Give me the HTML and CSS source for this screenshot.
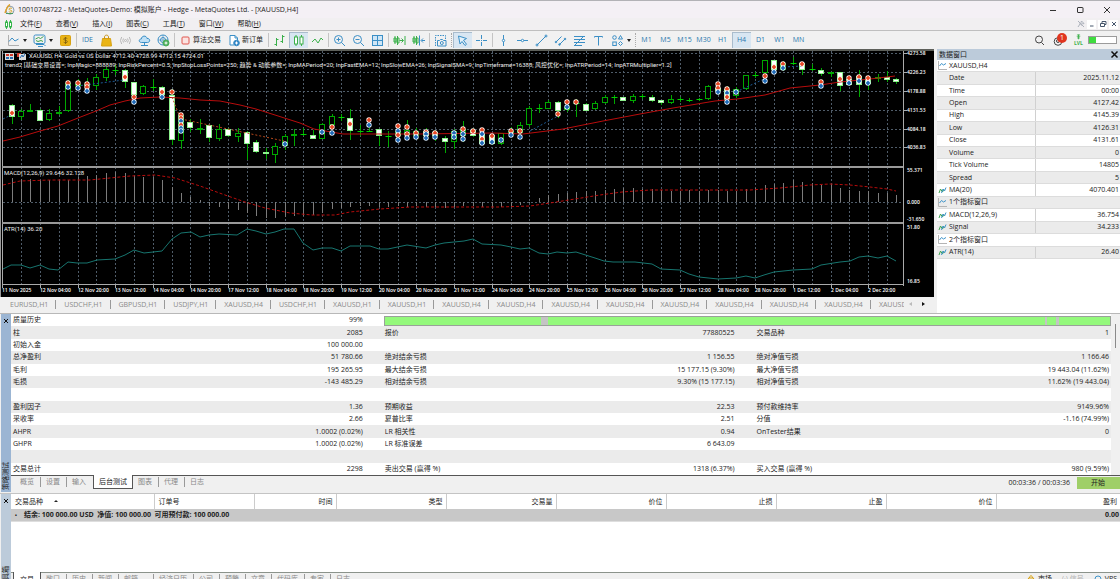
FILE: index.html
```html
<!DOCTYPE html>
<html lang="zh-CN">
<head>
<meta charset="utf-8">
<title>10010748722 - MetaQuotes-Demo: 模拟账户 - Hedge - MetaQuotes Ltd. - [XAUUSD,H4]</title>
<link rel="stylesheet" href="styles.css">
</head>
<body>
<svg class="defs" width="0" height="0" aria-hidden="true">
  <symbol id="i-window" viewBox="0 0 9 9"><path d="M.5 0v8.5H9" stroke="#b4b4b4"/><path d="M1.500 5l2-2.500 2 1.500L8 2.500" stroke="#3d93c9"/></symbol>
  <symbol id="i-ind" viewBox="0 0 9 9"><path d="M1 7l1.500-4 2 3L6 3" stroke="#3fa34f"/><path d="M3.500 7L5 3l1.500 2L8 1.500" stroke="#3d93c9"/></symbol>
</svg>

<header class="titlebar">
  <svg class="logo" viewBox="0 0 11 11"><circle cx="6" cy="6.200" r="4" fill="#eef3f7" stroke="#8a9bab"/><path d="M6 .5c-2 1-3 3-3.500 4.500L1 9" stroke="#e0a02a" stroke-width="1.500"/><path d="M8 4.500c-1-.8-3-.5-3 .7s3 .8 3 2-2.200 1.300-3.200.4" stroke="#dba12c"/><path d="M2 9.500h7" stroke="#4b9a62"/></svg>
  <h1>10010748722 - MetaQuotes-Demo: 模拟账户 - Hedge - MetaQuotes Ltd. - [XAUUSD,H4]</h1>
  <div class="wincontrols">
    <button aria-label="最小化"><svg viewBox="0 0 8 8"><path d="M1 4.500h6"/></svg></button>
    <button aria-label="最大化"><svg viewBox="0 0 8 8"><rect x="1.500" y="1.500" width="5.500" height="5" rx=".5"/></svg></button>
    <button aria-label="关闭"><svg viewBox="0 0 8 8"><path d="M1 1l6 6M7 1L1 7"/></svg></button>
  </div>
</header>

<nav class="menubar">
  <svg class="menuicon" viewBox="0 0 9 9"><path d="M2.500 0v9M6.500 0v9"/><rect x="1.500" y="2" width="2" height="5" fill="#fff"/><rect x="5.500" y="2" width="2" height="5" fill="#fff"/></svg>
  <button>文件(<u>F</u>)</button><button>查看(<u>V</u>)</button><button>插入(<u>I</u>)</button><button>图表(<u>C</u>)</button><button>工具(<u>T</u>)</button><button>窗口(<u>W</u>)</button><button>帮助(<u>H</u>)</button>
  <div class="mdi">
    <button class="off" aria-label="固定"><svg viewBox="0 0 8 8"><path d="M1 1l6 6M4.500 1L7 3.500 5.500 4 4 2.500zM3 4L1 7M2.500 3l3 3"/></svg></button>
    <button aria-label="最小化图表"><svg viewBox="0 0 8 8"><path d="M2 6h3.500"/></svg></button>
    <button aria-label="还原图表"><svg viewBox="0 0 8 8"><path d="M3 3V1.500h4V4.500H5.500M1.500 3.500h4v3h-4z"/></svg></button>
    <button aria-label="关闭图表"><svg viewBox="0 0 8 8"><path d="M2 2l4 4M6 2L2 6"/></svg></button>
  </div>
</nav>

<div class="toolbar">
  <button class="dd" aria-label="图表类型"><svg viewBox="0 0 13 13"><path d="M1.500 1v10.500H12" stroke="#b0b0b0"/><path d="M2 7.500l3-3.500 3 3 3.500-2"/></svg><i></i></button>
  <button class="dd" aria-label="模板"><svg viewBox="0 0 13 13"><path d="M3 10.500h8l1.500 1.500M5 12.500h5"/><rect x="1" y="1" width="11" height="8.500" rx="1.500"/><path d="M2.500 5l3-1.500 2 1 3-2" stroke="#3fa34f"/><path d="M3 6.500l2 1 3-1 2 1" stroke="#3fa34f"/></svg><i></i></button>
  <button aria-label="资金"><svg viewBox="0 0 13 13"><rect x="1.500" y="1.500" width="10" height="10" rx="1" fill="#eab414" stroke="#d8a213"/><path d="M8.300 4.500c-1.200-.9-3.600-.6-3.600.7s3.700 1 3.700 2.400-2.700 1.500-3.800.5M6.500 3v7" stroke="#7a5a10" stroke-width=".8"/></svg></button>
  <span class="sep"></span>
  <button class="word">IDE</button>
  <button aria-label="市场"><svg viewBox="0 0 13 13"><path d="M2.500 4.500h8l1 7.500h-10z" fill="#eab414" stroke="#d8a213"/><path d="M4.500 5V3c0-2.500 4-2.500 4 0v2" stroke="#c9941a"/></svg></button>
  <button aria-label="信号"><svg viewBox="0 0 13 13" class="mute"><circle cx="6.500" cy="6.500" r="1"/><path d="M4.500 4.500q-1.500 2 0 4M8.500 4.500q1.500 2 0 4M2.700 3q-2.500 3.500 0 7M10.300 3q2.500 3.500 0 7"/></svg></button>
  <button aria-label="云"><svg viewBox="0 0 13 13"><path d="M3.500 8.500C.5 8.500.5 5 3.300 5 3.500 1.500 8.500 1 9 4.500c3.500-.5 3.500 4 .5 4z" fill="#bfe0f5"/><path d="M6.500 8.500V11M3 11.500h7"/></svg></button>
  <button aria-label="社区"><svg viewBox="0 0 13 13"><circle cx="6" cy="6" r="5"/><circle cx="6" cy="6" r="2.500"/><path d="M1 6h10M6 1v10" stroke-width=".6"/><circle cx="9" cy="9" r="3" fill="#4cae5b" stroke="#4cae5b"/><path d="M7.500 9h3M9 7.500v3" stroke="#fff"/></svg></button>
  <span class="sep"></span>
  <button class="text"><svg viewBox="0 0 13 13"><rect x="3" y="3" width="7" height="7" rx="1" stroke="#e0574f" fill="#fbe3e1"/></svg>算法交易</button>
  <button class="text"><svg viewBox="0 0 13 13"><path d="M9.500 6V4L7 1.500H2v9.500h4" fill="#fff"/><path d="M7 1.500V4h2.500"/><circle cx="8.500" cy="9" r="2.800" fill="#2f82c4"/><path d="M7 9h3M8.500 7.500v3" stroke="#fff"/></svg>新订单</button>
  <span class="sep"></span>
  <button aria-label="柱状图"><svg viewBox="0 0 13 13" class="green"><path d="M3.500 4v8M1.500 10.500h2M3.500 5.500h2M9.500 1v8M7.500 7.500h2M9.500 2.500h2"/></svg></button>
  <button class="on" aria-label="蜡烛图"><svg viewBox="0 0 13 13" class="green"><path d="M4 1v11M9.500 1v11"/><rect x="2.500" y="3" width="3" height="7" fill="#fff"/><rect x="8" y="3" width="3" height="7" fill="#fff"/></svg></button>
  <button aria-label="折线图"><svg viewBox="0 0 13 13" class="green"><path d="M1 8l3-3 3 4 3-5 2 2"/></svg></button>
  <span class="sep"></span>
  <button aria-label="放大"><svg viewBox="0 0 13 13"><circle cx="5.500" cy="5.500" r="4"/><path d="M8.500 8.500L12 12M3.500 5.500h4M5.500 3.500v4"/></svg></button>
  <button aria-label="缩小"><svg viewBox="0 0 13 13"><circle cx="5.500" cy="5.500" r="4"/><path d="M8.500 8.500L12 12M3.500 5.500h4"/></svg></button>
  <button aria-label="平铺"><svg viewBox="0 0 13 13"><rect x="1.500" y="1.500" width="10" height="10" fill="#cfe6f6"/><path d="M6.500 1.500v10M1.500 6.500h10"/></svg></button>
  <span class="sep"></span>
  <button aria-label="自动滚动"><svg viewBox="0 0 13 13" class="green"><path d="M2 2v8M4.500 2v9M1 4h2v4H1zM4 4h2v5H4zM6.500 6.500H10M8.500 4.500l2 2-2 2M12 2v9"/></svg></button>
  <button aria-label="图表平移"><svg viewBox="0 0 13 13"><path class="green" d="M2 2v8M4.500 2v9M1 4h2v4H1zM4 4h2v5H4z"/><path d="M7.500 1.500v10M13 6.500H9.500M11 4.500l-2 2 2 2"/></svg></button>
  <span class="sep"></span>
  <button aria-label="截图"><svg viewBox="0 0 13 13"><path d="M1.500 12V1.500h10V5" stroke-dasharray="1.500 1"/><path d="M3.500 6.500h2l1-1h2l1 1h2.500v5.500H3.500z"/><circle cx="7.800" cy="9" r="1.500"/></svg></button>
  <span class="sep dots"></span>
  <button class="on" aria-label="光标"><svg viewBox="0 0 13 13"><path d="M2.500 2l8 2.500-3 1.800 3 4-1.500 1.200-3-4-2 2.500z" fill="#e4f1fa"/></svg></button>
  <button aria-label="十字"><svg viewBox="0 0 13 13"><path d="M6.500 1v4M6.500 8v4M1 6.500h4M8 6.500h4M6 6.500h1"/></svg></button>
  <span class="sep"></span>
  <button aria-label="垂直线"><svg viewBox="0 0 13 13"><path d="M6.500 1v11"/><circle cx="6.500" cy="6.500" r="1.200" fill="#fff"/></svg></button>
  <button aria-label="水平线"><svg viewBox="0 0 13 13"><path d="M1 6.500h11"/><circle cx="6.500" cy="6.500" r="1.200" fill="#fff"/></svg></button>
  <button aria-label="趋势线"><svg viewBox="0 0 13 13"><path d="M2 11l9-9"/><circle cx="2" cy="11" r="1"/><circle cx="11" cy="2" r="1"/></svg></button>
  <button aria-label="通道"><svg viewBox="0 0 13 13"><path d="M1.500 8.500l6-6M5 11l6.500-6.500"/><circle cx="2" cy="8" r=".8"/><circle cx="5.500" cy="10.500" r=".8"/><circle cx="11" cy="5" r=".8"/></svg></button>
  <button aria-label="斐波那契"><svg viewBox="0 0 13 13"><path d="M1 2.500h11M1 5.500h11M1 8.500h11M1 11.500h8M2 11l8-8"/></svg></button>
  <button aria-label="文本"><svg viewBox="0 0 13 13"><path d="M2.500 3.500V2.500h8v1M6.500 2.500v9"/></svg></button>
  <button class="dd" aria-label="图形"><svg viewBox="0 0 13 13"><circle cx="3.500" cy="3.500" r="1.800"/><path d="M9.500 1.500l2 3.500h-4zM9.500 7.500l2 2-2 2-2-2z"/><rect x="1.800" y="8" width="3.500" height="3.500"/></svg><i></i></button>
  <span class="sep dots"></span>
  <button class="word">M1</button><button class="word">M5</button><button class="word">M15</button><button class="word">M30</button><button class="word">H1</button><button class="word on">H4</button><button class="word">D1</button><button class="word">W1</button><button class="word">MN</button>
  <div class="status">
    <button aria-label="搜索"><svg viewBox="0 0 13 13" class="dark"><circle cx="6" cy="5.500" r="3.500"/><path d="M8.500 8.500L11 11"/></svg></button>
    <button class="bell" aria-label="通知"><svg viewBox="0 0 13 13" class="dark"><circle cx="5" cy="7.500" r="3.800"/><circle cx="5" cy="7" r="1.500"/></svg><b>1</b></button>
    <button class="lvl" aria-label="等级"><svg viewBox="0 0 9 8" class="green"><path d="M4.500 1v5M2.500 2.500h4M3 4.500h3M4.500 0l1 1-1 1-1-1z"/></svg><span>LVL</span></button>
    <span class="meter"><span></span></span>
  </div>
</div>

<main class="work">
  <section class="chartside">
    <svg id="chart" class="chart" viewBox="0 49 934 248" role="img" aria-label="XAUUSD, H4"></svg>
    <nav class="charttabs">
      <div class="tablist">
        <a href="#">EURUSD,H1</a><a href="#">USDCHF,H1</a><a href="#">GBPUSD,H1</a><a href="#">USDJPY,H1</a><a href="#">XAUUSD,H4</a><a href="#">USDCHF,H1</a><a href="#">XAUUSD,H1</a><a href="#">XAUUSD,H1</a><a href="#">XAUUSD,H4</a><a href="#">XAUUSD,H4</a><a href="#">XAUUSD,H4</a><a href="#">XAUUSD,H4</a><a href="#">XAUUSD,H4</a><a href="#">XAUUSD,H4</a><a href="#">XAUUSD,H4</a><a href="#">XAUUSD,H4</a><a href="#">XAUUSD</a>
      </div>
      <button class="arrow left" aria-label="向左"></button>
      <button class="arrow right" aria-label="向右"></button>
    </nav>
  </section>
  <aside class="datawin">
    <header><h2>数据窗口</h2><button class="x" aria-label="关闭"><svg viewBox="0 0 6 6"><path d="M1 1l4 4M5 1L1 5"/></svg></button></header>
    <table>
      <colgroup><col class="name"><col></colgroup>
      <tr class="wide"><td colspan="2"><svg><use href="#i-window"/></svg>XAUUSD,H4</td></tr>
      <tr><td>Date</td><td>2025.11.12</td></tr>
      <tr><td>Time</td><td>00:00</td></tr>
      <tr><td>Open</td><td>4127.42</td></tr>
      <tr><td>High</td><td>4145.39</td></tr>
      <tr><td>Low</td><td>4126.31</td></tr>
      <tr><td>Close</td><td>4131.61</td></tr>
      <tr><td>Volume</td><td>0</td></tr>
      <tr><td>Tick Volume</td><td>14805</td></tr>
      <tr><td>Spread</td><td>5</td></tr>
      <tr class="ico"><td><svg><use href="#i-ind"/></svg>MA(20)</td><td>4070.401</td></tr>
      <tr class="wide"><td colspan="2"><svg><use href="#i-window"/></svg>1个指标窗口</td></tr>
      <tr class="ico"><td><svg><use href="#i-ind"/></svg>MACD(12,26,9)</td><td>36.754</td></tr>
      <tr class="ico"><td><svg><use href="#i-ind"/></svg>Signal</td><td>34.233</td></tr>
      <tr class="wide"><td colspan="2"><svg><use href="#i-window"/></svg>2个指标窗口</td></tr>
      <tr class="ico"><td><svg><use href="#i-ind"/></svg>ATR(14)</td><td>26.40</td></tr>
    </table>
  </aside>
</main>

<section class="panel tester">
  <div class="strip"><button class="x" aria-label="关闭"><svg viewBox="0 0 6 6"><path d="M1 1l4 4M5 1L1 5"/></svg></button><span>策略测试</span></div>
  <div class="body">
    <div class="scroll">
      <table class="report">
        <colgroup><col class="a"><col class="a"><col class="b"><col class="b"><col class="c"><col class="c"></colgroup>
        <tr><td>质量历史</td><td>99%</td><td colspan="4" class="quality"><div><i style="left:21.5%;width:1%"></i><i style="left:91%;width:.3%"></i><i style="left:92.600%;width:.4%"></i></div></td></tr>
        <tr><td>柱</td><td>2085</td><td>报价</td><td>77880525</td><td>交易品种</td><td>1</td></tr>
        <tr><td>初始入金</td><td>100 000.00</td><td></td><td></td><td></td><td></td></tr>
        <tr><td>总净盈利</td><td>51 780.66</td><td>绝对结余亏损</td><td>1 156.55</td><td>绝对净值亏损</td><td>1 166.46</td></tr>
        <tr><td>毛利</td><td>195 265.95</td><td>最大结余亏损</td><td>15 177.15 (9.30%)</td><td>最大净值亏损</td><td>19 443.04 (11.62%)</td></tr>
        <tr><td>毛损</td><td>-143 485.29</td><td>相对结余亏损</td><td>9.30% (15 177.15)</td><td>相对净值亏损</td><td>11.62% (19 443.04)</td></tr>
        <tr><td></td><td></td><td></td><td></td><td></td><td></td></tr>
        <tr><td>盈利因子</td><td>1.36</td><td>预期收益</td><td>22.53</td><td>预付款维持率</td><td>9149.96%</td></tr>
        <tr><td>采收率</td><td>2.66</td><td>夏普比率</td><td>2.51</td><td>分值</td><td>-1.16 (74.99%)</td></tr>
        <tr><td>AHPR</td><td>1.0002 (0.02%)</td><td>LR 相关性</td><td>0.94</td><td>OnTester结果</td><td>0</td></tr>
        <tr><td>GHPR</td><td>1.0002 (0.02%)</td><td>LR 标准误差</td><td>6 643.09</td><td></td><td></td></tr>
        <tr><td></td><td></td><td></td><td></td><td></td><td></td></tr>
        <tr><td>交易总计</td><td>2298</td><td>卖出交易 (赢得 %)</td><td>1318 (6.37%)</td><td>买入交易 (赢得 %)</td><td>980 (9.59%)</td></tr>
      </table>
      <div class="track"><span></span></div>
    </div>
    <div class="tabs">
      <button>概览</button><button>设置</button><button class="cur">输入</button><button class="sel">后台测试</button><button>图表</button><button>代理</button><button class="cur">日志</button>
      <span class="elapsed">00:03:36 / 00:03:36</span><button class="start">开始</button>
    </div>
  </div>
</section>

<section class="panel toolbox">
  <div class="strip"><button class="x" aria-label="关闭"><svg viewBox="0 0 6 6"><path d="M1 1l4 4M5 1L1 5"/></svg></button><span>工具箱</span></div>
  <div class="body">
    <table class="trades">
      <colgroup><col class="sym"><col class="ord"><col class="tim"><col class="num"><col class="num"><col class="num"><col class="num"><col class="num"><col class="num"><col></colgroup>
      <thead><tr><th>交易品种<i></i></th><th>订单号</th><th>时间</th><th>类型</th><th>交易量</th><th>价位</th><th>止损</th><th>止盈</th><th>价位</th><th>盈利</th></tr></thead>
      <tbody><tr><td colspan="9">结余: 100 000.00 USD&nbsp; 净值: 100 000.00&nbsp; 可用预付款: 100 000.00</td><td>0.00</td></tr></tbody>
    </table>
    <div class="blank"></div>
    <div class="tabs">
      <button class="sel">交易</button><button>敞口</button><button>历史</button><button>新闻</button><button class="mail">邮箱</button><button>经济日历</button><button>公司</button><button>预警</button><button>文章</button><button>代码库</button><button>专家</button><button class="cur">日志</button>
      <div class="services"><span><svg viewBox="0 0 8 8"><path d="M1.500 3h5l.5 4.500H1zM2.500 3c0-3 3-3 3 0" stroke="#d8a213"/></svg>市场</span><span class="mute">(·) 信号</span><span><svg viewBox="0 0 8 8"><circle cx="4" cy="4" r="3" stroke="#3d93c9"/></svg>VPS</span></div>
    </div>
  </div>
</section>
<script src="chart.js"></script>
</body>
</html>
```

FILE: styles.css
```css
* { box-sizing: border-box; }
html, body { height: 100%; }
body {
  margin: 0;
  overflow: hidden;
  background: #f0f0f0;
  color: #222;
  font: 7px/12px "Open Sans", "Noto Sans CJK SC", sans-serif;
  border-top: 1px solid #b2b2b6;
}
button {
  margin: 0; padding: 0; border: 0; background: none;
  color: inherit; font: inherit;
  display: flex; align-items: center; justify-content: center;
}
h1, h2 { margin: 0; font: inherit; }
svg { fill: none; flex: none; }
i { font-style: normal; }
.defs { position: absolute; }

.titlebar { display: flex; align-items: center; height: 17px; padding: 0 6px 0 4px; background: #f4f0f5; }
.logo { width: 11px; height: 11px; margin-right: 3px; }
.wincontrols { margin-left: auto; display: flex; gap: 13px; }
.wincontrols button { width: 14px; height: 14px; }
.wincontrols svg { width: 8px; height: 8px; stroke: #333; }

.menubar { display: flex; align-items: center; height: 13px; padding: 0 2px 0 4px; background: #f1eff1; border-bottom: 1px solid #bfbfbf; }
.menuicon { width: 9px; height: 9px; stroke: #35b54a; }
.menubar > button { padding: 0 7px; white-space: nowrap; }
.mdi { margin-left: auto; display: flex; gap: 2px; }
.mdi button { width: 9px; height: 9px; background: #fff; }
.mdi .off { background: none; opacity: .4; }
.mdi svg { width: 8px; height: 8px; stroke: #46566c; }

.toolbar { display: flex; align-items: center; height: 18px; padding-left: 4px; background: #f1f1f1; }
.toolbar button { width: 19px; height: 16px; flex: none; }
.toolbar svg { width: 13px; height: 13px; stroke: #3b8fc6; }
.toolbar .green, .toolbar svg .green { stroke: #3bb04b; }
.toolbar svg.dark { stroke: #444; }
.toolbar svg.mute { stroke: #b9b9b9; }
.toolbar .dd { width: 26px; justify-content: flex-start; padding-left: 3px; gap: 3px; }
.toolbar .dd i { border: 2px solid transparent; border-top: 3px solid #222; border-bottom: 0; }
.toolbar .text { width: auto; padding: 0 4px 0 3px; gap: 1px; }
.toolbar .word { color: #2878ae; }
.toolbar .on { background: #d8e6f2; box-shadow: inset 1px 1px #a9bccd; }
.sep { width: 1px; height: 14px; margin: 0 1px; background: #c4c4c4; flex: none; }
.sep.dots { background: none; border-left: 1px dotted #aaa; }
.status { margin-left: auto; display: flex; align-items: center; padding-right: 3px; }
.status .bell { position: relative; margin-left: 1px; }
.bell b { position: absolute; right: 2px; top: 1px; width: 10px; height: 10px; border-radius: 5px; background: #e0351f; color: #fff; font-weight: 400; line-height: 10px; }
.toolbar .lvl { flex-direction: column; width: 19px; color: #3bb04b; font-size: 5px; line-height: 5px; font-weight: 700; }
.toolbar .lvl svg { width: 9px; height: 7px; }
.meter { width: 29px; height: 8px; border: 1px solid #9b9b9b; background: #fff; }
.meter span { display: block; width: 27%; height: 100%; background: #3edb3e; }

.work { display: flex; }
.chartside { flex: 1; min-width: 0; background: #f0f0f0; }
.chart { display: block; width: 100%; height: auto; background: #000; }
.chart text { font-family: Roboto, "Noto Sans CJK SC", sans-serif; font-size: 6px; fill: #eee; }
.chart text.axis { font-family: "Open Sans", sans-serif; font-size: 5px; font-weight: 600; fill: #fff; }
.charttabs { display: flex; align-items: center; height: 16px; padding: 0 4px 2px 2px; color: #8a8a8a; }
.tablist { display: flex; flex: 1; min-width: 0; overflow: hidden; }
.tablist a { flex: none; padding: 0 7px 0 8px; line-height: 9px; border-right: 1px solid #999; color: inherit; text-decoration: none; }
.tablist a:last-child { border: 0; }
.arrow { width: 13px; height: 9px; }
.arrow::before { content: ""; border: 2px solid transparent; }
.arrow.left::before { border-right: 3px solid #bbb; border-left: 0; }
.arrow.right::before { border-left: 3px solid #111; border-right: 0; }

.datawin { width: 186px; padding-left: 3px; background: #fff; box-shadow: inset 3px 0 #f0f0f0; }
.datawin header { display: flex; align-items: center; justify-content: space-between; height: 11px; padding: 0 2px; background: #bccbda; }
.x { width: 6px; height: 10px; }
.x svg { width: 6px; height: 6px; stroke: #111; }
table { border-collapse: collapse; border-spacing: 0; }
td, th { padding: 0; }
.datawin table { width: 100%; height: 199px; table-layout: fixed; }
.datawin td { padding-left: 12px; border-bottom: 1px solid #dcdcdc; line-height: 10px; white-space: nowrap; }
.datawin td + td { text-align: right; padding: 0 1px 0 0; border-left: 1px solid #d0d0d0; }
.datawin .name { width: 54%; }
.datawin tr:nth-child(even) { background: #ebebeb; }
.datawin svg { width: 9px; height: 9px; vertical-align: middle; margin-right: 2px; }
.datawin .wide td, .datawin .ico td:first-child { padding-left: 1px; }

.panel { display: flex; padding-left: 1px; }
.strip { width: 10px; flex: none; display: flex; flex-direction: column; align-items: center; justify-content: space-between; padding: 2px 0; background: #9bb5d3; }
.strip span { writing-mode: vertical-rl; text-orientation: sideways; transform: rotate(180deg); line-height: 10px; }
.panel .body { flex: 1; min-width: 0; }
.tester { border-top: 1px solid #b8b8b8; }
.scroll { display: flex; background: #fff; border-bottom: 1px solid #555; }
.report { flex: 1; height: 161px; table-layout: fixed; }
.report tr { height: 12px; }
.report td { line-height: 12px; white-space: nowrap; }
.report tr:nth-child(even) { background: #ebebeb; }
.report td:nth-child(odd) { padding-left: 13px; }
.report td:first-child { padding-left: 2px; }
.report td:nth-child(even) { text-align: right; padding-right: 9px; }
.report td:last-child { padding-right: 2px; }
.report .a { width: 16.4%; }
.report .b { width: 16.9%; }
.report .c { width: 16.7%; }
.report td.quality { padding: 1px 0 0 12px; }
.quality div { position: relative; height: 10px; background: #94f97c; border: 1px solid #9aa19a; }
.quality i { position: absolute; top: 0; bottom: 0; background: #c4c4c4; }
.track { width: 9px; flex: none; background: #f0f0f0; padding: 10px 3px 0 4px; }
.track span { display: block; height: 24px; background: #8a8a8a; width: 1px; }

.tabs { display: flex; align-items: flex-start; height: 16px; padding-left: 4px; color: #888; }
.tabs button { padding: 0 6px 0 5px; line-height: 10px; margin-top: 1px; border-right: 1px solid #999; white-space: nowrap; }
.tabs .cur { border-right-color: transparent; }
.tabs .sel { margin-top: -1px; height: 14px; color: #222; background: #fff; border: 1px solid #555; border-top: 0; padding: 0 5px; }
.elapsed { margin-left: auto; padding-right: 7px; line-height: 14px; color: #222; }
.tabs .start { width: 43px; height: 12px; margin-top: 1px; border: 0; background: #9fcf68; color: #222; }

.toolbox { border-top: 1px solid #c4c4c4; margin-top: 1px; }
.toolbox .strip { background: #bccbda; }
.trades { width: 100%; table-layout: fixed; background: #fff; }
.trades th { height: 15px; font-weight: 400; text-align: right; padding-right: 3px; border-right: 1px solid #ccc; }
.trades th:nth-child(-n+2) { text-align: left; padding-left: 4px; }
.trades th:last-child { border-right: 0; }
.trades th i { display: inline-block; margin: 0 0 2px 11px; border: 2px solid transparent; border-bottom-color: #222; border-top: 0; }
.trades tbody tr { background: #c8c8c8; border-bottom: 1px solid #dedede; }
.trades td { font-weight: 700; height: 12px; padding-left: 4px; white-space: nowrap; }
.trades td:first-child::before { content: "•"; padding-right: 7px; font-size: 5px; }
.trades td:last-child { text-align: right; padding-right: 1px; }
.trades .sym { width: 143px; }
.trades .ord { width: 100px; }
.trades .tim { width: 82px; }
.trades .num { width: 110px; }
.blank { height: 51px; background: #fff; border-bottom: 1px solid #8b938b; }
.toolbox .tabs { padding-left: 2px; }
.toolbox .tabs button { margin-top: 1px; }
.toolbox .tabs .sel { margin-top: -1px; height: 17px; padding: 0 6px; }
.toolbox .tabs .mail { padding-right: 15px; }
.services { margin-left: auto; display: flex; gap: 10px; padding: 0 3px 0 0; color: #222; }
.services span { display: flex; align-items: center; gap: 3px; }
.services .mute { color: #b0b0b0; }
.services svg { width: 8px; height: 8px; }
```

FILE: chart.js
```js
const NS = 'http://www.w3.org/2000/svg';
const chart = document.getElementById('chart');
const barX = k => 2.2 + 9.413 * k;

function add(tag, attrs, text) {
  const el = document.createElementNS(NS, tag);
  for (const key in attrs) el.setAttribute(key, attrs[key]);
  if (text) el.textContent = text;
  chart.appendChild(el);
  return el;
}
function line(x1, y1, x2, y2, stroke, extra) {
  add('line', Object.assign({ x1, y1, x2, y2, stroke }, extra));
}
function poly(points, stroke, extra) {
  add('polyline', Object.assign({ points, stroke, fill: 'none' }, extra));
}

// Grid
const grid = '#4f5c69';
for (let i = 0; i < 48; i++) {
  const x = Math.round(barX(2 * i)) + 0.5;
  if (i) line(x, 51, x, 284, grid, { 'stroke-dasharray': '2 2' });
}
const prices = ['4273.58', '4226.23', '4178.88', '4131.53', '4084.18', '4036.83'];
prices.forEach((p, i) => {
  const y = Math.round(53.3 + i * 18.8) + 0.5;
  line(3, y, 903, y, grid, { 'stroke-dasharray': '2 2' });
});
line(3, 202.5, 903, 202.5, grid, { 'stroke-dasharray': '2 2' });

// MACD histogram: bar ends, measured against the zero line
const macd = [178, 178, 179, 179, 180, 180, 180, 180, 177, 176, 175, 173, 172, 173, 176, 177, 177, 180, 187, 193, 197, 200,
  206, 207, 209, 210, 213, 216, 218, 218, 217, 216, 216, 215, 213, 209, 208, 207, 206, 206, 207, 207, 206, 207, 206, 207, 207,
  208, 207, 206, 206, 207, 207, 207, 207, 205, 203, 198, 195, 194, 193, 192, 191, 191, 190, 189, 188, 188, 189, 189, 190, 191,
  191, 190, 191, 190, 190, 191, 191, 189, 188, 185, 184, 183, 180, 182, 183, 185, 184, 188, 190, 191, 191, 193, 193, 195];
macd.forEach((y, k) => {
  if (k) line(Math.round(barX(k)) + 0.5, 202, Math.round(barX(k)) + 0.5, y, '#7c7c7c');
});
poly('3,185 20,181 50,180 90,180 110,178 130,176 155,175 175,178 200,186 225,195 245,202 265,208 290,213 312,215 335,215 350,212 380,209 410,207 500,207 530,206 550,203 575,199 600,195 622,192 650,190 700,190 750,190 780,188 810,185 830,184 850,185 870,187 887,189 896,191', '#b80c0c', { 'stroke-dasharray': '3 2' });

// ATR
poly('3,269 11,265 21,265 30,268 40,265 49,269 58,270 68,262 77,263 87,263 97,260 115,259 125,255 134,250 144,253 153,252 162,251 172,239 181,233 191,232 200,237 209,235 219,234 237,235 247,229 256,231 266,234 275,232 284,229 294,229 303,243 313,250 322,248 332,248 341,251 350,246 370,246 379,249 388,249 407,245 426,248 435,245 444,243 464,241 473,239 482,244 501,245 511,247 520,249 529,248 539,253 548,254 557,252 567,253 576,252 595,258 604,261 613,262 635,262 652,264 661,269 680,270 689,274 699,277 718,279 736,278 746,276 755,278 764,275 774,272 793,270 812,269 821,265 840,262 850,261 859,257 868,256 878,258 887,256 896,261', '#17756f');

// Candles: [bar, body top, body bottom, high, low, u = hollow, d = filled]
const candles = [
  [1, 105, 117, 104, 124, 'd'], [2, 111, 117, 109, 120, 'u'], [3, 110, 111, 104, 112, 'u'], [4, 110, 121, 109, 121, 'd'],
  [5, 113, 120, 109, 121, 'u'], [6, 112, 113, 106, 115, 'u'], [7, 83, 111, 80, 112, 'u'], [8, 84, 85, 79, 90, 'u'],
  [9, 84, 86, 78, 92, 'u'], [10, 77, 86, 74, 90, 'u'], [11, 69, 78, 67, 81, 'u'], [12, 70, 70, 65, 75, 'u'],
  [13, 70, 82, 69, 88, 'd'], [14, 82, 95, 82, 98, 'd'], [15, 86, 94, 85, 95, 'u'], [16, 87, 87, 79, 91, 'u'],
  [17, 87, 95, 86, 97, 'd'], [18, 95, 140, 89, 145, 'd'], [19, 115, 141, 114, 149, 'u'], [20, 122, 128, 119, 132, 'd'],
  [21, 128, 130, 119, 134, 'u'], [22, 125, 138, 125, 142, 'd'], [23, 129, 139, 124, 141, 'u'], [24, 129, 136, 128, 137, 'd'],
  [25, 133, 137, 128, 142, 'u'], [26, 132, 144, 131, 160, 'd'], [27, 142, 152, 140, 153, 'd'], [28, 152, 154, 148, 159, 'd'],
  [29, 146, 155, 143, 163, 'u'], [30, 136, 146, 134, 150, 'u'], [31, 134, 136, 129, 146, 'u'], [32, 134, 134, 128, 136, 'u'],
  [33, 135, 139, 130, 139, 'd'], [34, 124, 139, 123, 139, 'u'], [35, 116, 125, 114, 126, 'u'], [36, 117, 117, 114, 121, 'u'],
  [37, 118, 131, 109, 140, 'd'], [38, 131, 131, 125, 136, 'u'], [39, 131, 131, 128, 132, 'u'], [40, 129, 136, 129, 146, 'd'],
  [41, 136, 136, 131, 147, 'u'], [42, 131, 136, 128, 140, 'u'], [43, 130, 135, 120, 138, 'u'], [44, 131, 136, 128, 138, 'u'],
  [45, 131, 136, 128, 139, 'd'], [46, 132, 136, 130, 141, 'd'], [47, 138, 142, 136, 153, 'd'], [48, 131, 142, 129, 149, 'u'],
  [49, 129, 136, 121, 142, 'u'], [50, 130, 136, 128, 137, 'd'], [51, 134, 144, 130, 145, 'd'], [52, 135, 144, 135, 145, 'd'],
  [53, 133, 144, 133, 145, 'u'], [54, 131, 133, 127, 137, 'u'], [55, 125, 133, 122, 137, 'u'], [56, 108, 125, 106, 127, 'u'],
  [57, 108, 108, 104, 113, 'u'], [58, 102, 109, 100, 109, 'u'], [59, 102, 111, 101, 118, 'd'], [60, 107, 110, 105, 112, 'u'],
  [61, 103, 103, 99, 117, 'u'], [62, 104, 111, 103, 111, 'd'], [63, 103, 109, 101, 110, 'u'], [64, 97, 103, 95, 104, 'u'],
  [65, 97, 97, 95, 104, 'u'], [66, 97, 101, 97, 101, 'd'], [67, 96, 101, 94, 103, 'u'], [68, 96, 96, 94, 99, 'u'],
  [69, 97, 101, 95, 102, 'd'], [70, 100, 103, 100, 105, 'd'], [71, 99, 103, 95, 104, 'u'], [72, 99, 99, 97, 102, 'u'],
  [73, 100, 100, 98, 102, 'u'], [74, 99, 99, 98, 101, 'u'], [75, 86, 99, 85, 100, 'u'], [76, 88, 91, 83, 95, 'd'],
  [77, 89, 100, 86, 104, 'd'], [78, 89, 96, 87, 98, 'u'], [79, 75, 89, 75, 90, 'u'], [80, 75, 75, 72, 78, 'u'],
  [81, 60, 73, 60, 74, 'u'], [82, 60, 70, 60, 74, 'd'], [83, 63, 70, 61, 71, 'u'], [84, 63, 63, 57, 65, 'd'],
  [85, 63, 70, 62, 75, 'd'], [86, 69, 69, 64, 71, 'u'], [87, 70, 74, 68, 76, 'd'], [88, 72, 74, 72, 77, 'u'],
  [89, 72, 86, 72, 91, 'd'], [90, 79, 85, 76, 86, 'd'], [91, 76, 85, 70, 97, 'd'], [92, 79, 84, 76, 90, 'd'],
  [93, 77, 79, 74, 82, 'u'], [94, 77, 80, 71, 82, 'd'], [95, 79, 82, 78, 84, 'd']
];
for (const [k, top, bottom, high, low, kind] of candles) {
  const x = Math.round(barX(k)) + 0.5;
  line(x, high, x, low, '#00a800');
  if (bottom === top) {
    line(x - 3, top + 0.5, x + 3, top + 0.5, '#00d000');
  } else {
    add('rect', { x: x - 3, y: top + 0.5, width: 5, height: bottom - top - 1 || 1,
      fill: kind === 'd' ? '#fff' : '#000', stroke: kind === 'd' ? '#8cf08c' : '#00a800' });
  }
}

poly('3,141 20,137 40,131 58,126 78,118 96,111 110,105 125,101 140,98 160,97 180,98 200,100 220,101 240,105 256,109 275,115 300,123 314,129 343,134 420,134 493,133 523,134 555,130 563,129 603,121 640,114 673,108 715,101 737,99 765,95 790,88 820,85 840,82 870,79 895,76', '#b80c0c');

// Closed deals
const dashed = { 'stroke-dasharray': '2 2' };
line(77, 86, 124, 80, '#1c5a96', dashed);
line(530, 131, 558, 116, '#1c5a96', dashed);
line(736, 92, 764, 79, '#1c5a96', dashed);
line(784, 67, 802, 66, '#1c5a96', dashed);
line(3, 119, 11, 115, '#1c5a96', dashed);
line(172, 97, 181, 120, '#b8481c', dashed);
line(181, 119, 284, 141, '#b8481c', dashed);

// Deal markers: r = sell, b = buy
const deals = {
  1: 'r113', 7: 'r83 b87', 8: 'r83 b88', 9: 'r84 r87 b91', 13: 'r77', 14: 'r97 b102', 17: 'r92 b97', 18: 'r92',
  19: 'r115 r118 b121 r125 b128 b131', 30: 'b144', 34: 'b132', 35: 'r127 b133', 37: 'r124', 39: 'r120 b125',
  42: 'r126 b131 r135 b140', 43: 'r127 r134 b138', 44: 'r133 b137', 45: 'r132 b134 b138', 46: 'r133 b137', 48: 'b133 b137',
  49: 'r129 b134 b139', 50: 'r131', 51: 'r130 b134 r139 b143', 52: 'r136 b142', 53: 'b140', 54: 'r131 b135', 55: 'r131 b137',
  59: 'r114', 60: 'r102 b107', 61: 'r102', 76: 'r84 r88 b92', 77: 'r89 b93 r97 b102', 78: 'b92', 81: 'r76 b81',
  82: 'r67 b72', 83: 'r64 b68', 85: 'r64', 87: 'r82 b86', 89: 'r79', 90: 'r78 b83', 91: 'r77 b81', 92: 'r78 b83'
};
for (const k in deals) {
  for (const d of deals[k].split(' ')) {
    const sell = d[0] === 'r';
    const cx = Math.round(barX(k)), cy = +d.slice(1);
    add('circle', { cx, cy, r: 2.7, fill: sell ? '#ffe2da' : '#d5e8fa' });
    add('path', { d: `M${cx - 2} ${cy}h4M${cx} ${cy - 2}v4`, stroke: sell ? '#e8401c' : '#1764b4', 'stroke-width': 1.6 });
  }
}

// Frame, pane dividers and axes
add('rect', { x: 0, y: 49, width: 934, height: 2, fill: '#5d605a' });
add('rect', { x: 0, y: 49, width: 1, height: 248, fill: '#999' });
add('rect', { x: 2, y: 51, width: 1, height: 235, fill: '#aaa' });
add('rect', { x: 2, y: 166, width: 902, height: 2, fill: '#999' });
add('rect', { x: 2, y: 222, width: 902, height: 2, fill: '#999' });
add('rect', { x: 2, y: 284, width: 902, height: 1, fill: '#aaa' });
add('rect', { x: 903, y: 51, width: 1, height: 235, fill: '#aaa' });

const axis = (y, text) => add('text', { x: 907, y, class: 'axis' }, text);
prices.forEach((p, i) => {
  const y = Math.round(53.3 + i * 18.8);
  line(904, y + 0.5, 907, y + 0.5, '#aaa');
  axis(y + 2, p);
});
axis(172, '55.371');
axis(204, '0.000');
axis(221, '-31.650');
axis(229, '51.80');
axis(283, '16.85');

['11 Nov 2025', '12 Nov 04:00', '12 Nov 20:00', '13 Nov 12:00', '14 Nov 04:00', '14 Nov 20:00', '17 Nov 12:00', '18 Nov 04:00',
  '18 Nov 20:00', '19 Nov 12:00', '20 Nov 04:00', '20 Nov 20:00', '21 Nov 12:00', '24 Nov 04:00', '24 Nov 20:00', '25 Nov 12:00',
  '26 Nov 04:00', '26 Nov 20:00', '27 Nov 12:00', '28 Nov 04:00', '28 Nov 20:00', '1 Dec 12:00', '2 Dec 04:00', '2 Dec 20:00'
].forEach((label, i) => {
  const x = Math.round(barX(4 * i));
  line(x + 0.5, 285, x + 0.5, 288, '#aaa');
  add('text', { x, y: 292, class: 'axis' }, label);
});

add('rect', { x: 5, y: 53, width: 9, height: 7, fill: '#ddd' });
add('path', { d: 'M6 54h3v2H6zM10 54h3v2h-3z', fill: '#d0392b' });
add('path', { d: 'M6 57h3v2H6zM10 57h3v2h-3z', fill: '#2b6cb0' });
add('path', { d: 'M17 53h4v4h-4z', fill: '#d0392b' });
add('path', { d: 'M19 54h7v6h-7z', fill: '#ddd' });
add('path', { d: 'M20 58l2-3 1 2 2-3', stroke: '#2b6cb0' });
add('text', { x: 29, y: 58 }, 'XAUUSD, H4:  Gold vs US Dollar  4712.40 4728.99 4712.15 4724.01');
add('text', { x: 5, y: 67 }, 'trend2 [基础交易设置=; InpMagic=888889; InpRiskPercent=0.5; InpStopLossPoints=250; 趋势 & 动能参数=; InpMAPeriod=20; InpFastEMA=12; InpSlowEMA=26; InpSignalSMA=9; InpTimeframe=16388; 风控优化=; InpATRPeriod=14; InpATRMultiplier=1.2]');
add('text', { x: 4, y: 175 }, 'MACD(12,26,9) 29.646 32.128');
add('text', { x: 4, y: 231 }, 'ATR(14) 36.20');
```
